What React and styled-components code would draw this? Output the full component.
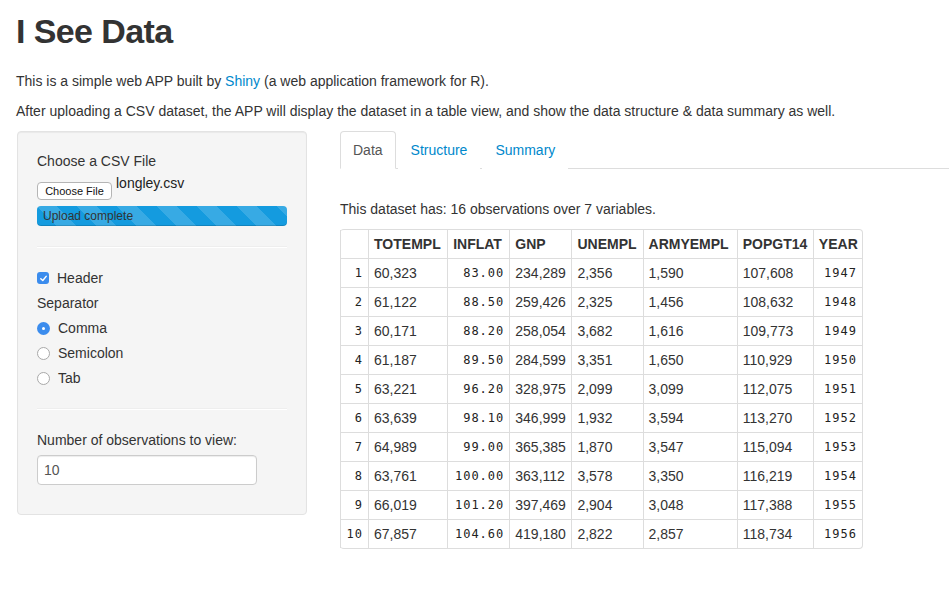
import React from "react";
import styled, { createGlobalStyle } from "styled-components";

const GlobalStyle = createGlobalStyle`
  body {
    margin: 0;
    background: #fff;
    color: #333;
    font-family: "Liberation Sans", Arial, sans-serif;
    font-size: 14px;
    line-height: 20px;
  }
`;

const columns = ["TOTEMPL", "INFLAT", "GNP", "UNEMPL", "ARMYEMPL", "POPGT14", "YEAR"];
const widths = [28, 79, 62, 62, 71, 94, 76, 49];

const rows = [
  ["60,323", "83.00", "234,289", "2,356", "1,590", "107,608", "1947"],
  ["61,122", "88.50", "259,426", "2,325", "1,456", "108,632", "1948"],
  ["60,171", "88.20", "258,054", "3,682", "1,616", "109,773", "1949"],
  ["61,187", "89.50", "284,599", "3,351", "1,650", "110,929", "1950"],
  ["63,221", "96.20", "328,975", "2,099", "3,099", "112,075", "1951"],
  ["63,639", "98.10", "346,999", "1,932", "3,594", "113,270", "1952"],
  ["64,989", "99.00", "365,385", "1,870", "3,547", "115,094", "1953"],
  ["63,761", "100.00", "363,112", "3,578", "3,350", "116,219", "1954"],
  ["66,019", "101.20", "397,469", "2,904", "3,048", "117,388", "1955"],
  ["67,857", "104.60", "419,180", "2,822", "2,857", "118,734", "1956"],
];

// columns that R prints as monospace, right aligned
const monoCols = [1, 6];

const App = () => {
  return (
    <>
      <GlobalStyle />
      <Page>
        <Title>I See Data</Title>
        <Para>
          This is a simple web APP built by <Link href="#">Shiny</Link> (a web application framework for R).
        </Para>
        <Para>
          After uploading a CSV dataset, the APP will display the dataset in a table view, and show the data structure &amp; data summary as well.
        </Para>
        <Row>
          <Sidebar>
            <Label>Choose a CSV File</Label>
            <FileRow>
              <FileButton>Choose File</FileButton>
              <FileName>longley.csv</FileName>
            </FileRow>
            <Progress>
              <ProgressText>Upload complete</ProgressText>
            </Progress>
            <Divider />
            <Option>
              <CheckBox>
                <svg width="9" height="9" viewBox="0 0 10 10">
                  <path d="M2 5.2 L4.2 7.3 L8 2.6" fill="none" stroke="#fff" strokeWidth="1.6" strokeLinecap="round" strokeLinejoin="round" />
                </svg>
              </CheckBox>
              Header
            </Option>
            <GroupLabel>Separator</GroupLabel>
            <Option>
              <Radio checked />
              Comma
            </Option>
            <Option>
              <Radio />
              Semicolon
            </Option>
            <Option>
              <Radio />
              Tab
            </Option>
            <Divider />
            <Label>Number of observations to view:</Label>
            <NumberInput>10</NumberInput>
          </Sidebar>
          <Main>
            <Tabs>
              <Tab active>Data</Tab>
              <Tab>Structure</Tab>
              <Tab>Summary</Tab>
            </Tabs>
            <Caption>This dataset has: 16 observations over 7 variables.</Caption>
            <Table>
              <colgroup>
                {widths.map((w, i) => (
                  <col key={i} style={{ width: w }} />
                ))}
              </colgroup>
              <thead>
                <tr>
                  <Th />
                  {columns.map((c) => (
                    <Th key={c}>{c}</Th>
                  ))}
                </tr>
              </thead>
              <tbody>
                {rows.map((r, i) => (
                  <tr key={i}>
                    <Td mono>{i + 1}</Td>
                    {r.map((v, j) => (
                      <Td key={j} mono={monoCols.includes(j)}>
                        {v}
                      </Td>
                    ))}
                  </tr>
                ))}
              </tbody>
            </Table>
          </Main>
        </Row>
      </Page>
    </>
  );
};

const Page = styled.div`
  padding: 0 0 40px 16px;
`;

const Title = styled.h1`
  margin: 11px 0 20px;
  font-size: 34px;
  line-height: 40px;
  font-weight: bold;
  color: #333;
  letter-spacing: -0.6px;
`;

const Para = styled.p`
  margin: 0 0 10px;
`;

const Link = styled.a`
  color: #0088cc;
  text-decoration: none;
`;

const Row = styled.div`
  display: flex;
  align-items: flex-start;
  gap: 33px;
`;

// панель слева
const Sidebar = styled.div`
  width: 250px;
  flex-shrink: 0;
  margin-left: 1px;
  padding: 19px;
  background: #f5f5f5;
  border: 1px solid #e3e3e3;
  border-radius: 4px;
  box-shadow: inset 0 1px 1px rgba(0, 0, 0, 0.05);
`;

const Label = styled.div`
  margin-bottom: 5px;
`;

const FileRow = styled.div`
  display: flex;
  align-items: flex-start;
  gap: 4px;
  height: 30px;
`;

const FileButton = styled.div`
  margin-top: 6px;
  width: 73px;
  height: 16px;
  border: 1px solid #b5b5b5;
  border-radius: 4px;
  background: #fff;
  color: #111;
  font-size: 11px;
  line-height: 17px;
  text-align: center;
`;

const FileName = styled.div`
  margin-top: -3px;
  color: #222;
`;

const Progress = styled.div`
  height: 20px;
  border-radius: 4px;
  background-color: #149bdf;
  background-image: linear-gradient(
    45deg,
    rgba(255, 255, 255, 0.15) 25%,
    transparent 25%,
    transparent 50%,
    rgba(255, 255, 255, 0.15) 50%,
    rgba(255, 255, 255, 0.15) 75%,
    transparent 75%,
    transparent
  );
  background-size: 40px 40px;
  box-shadow: inset 0 -1px 0 rgba(0, 0, 0, 0.15);
`;

const ProgressText = styled.div`
  padding-left: 6px;
  font-size: 12px;
  line-height: 20px;
  color: #333;
`;

const Divider = styled.hr`
  margin: 20px 0;
  border: 0;
  border-top: 1px solid #eee;
  border-bottom: 1px solid #fff;
`;

const Option = styled.div`
  display: flex;
  align-items: center;
  gap: 8px;
  margin-bottom: 5px;
`;

const GroupLabel = styled.div`
  margin-bottom: 5px;
`;

const CheckBox = styled.span`
  display: flex;
  align-items: center;
  justify-content: center;
  width: 12px;
  height: 12px;
  border-radius: 3px;
  background: #3b8ced;
`;

const Radio = styled.span`
  position: relative;
  width: ${({ checked }) => (checked ? "13px" : "11px")};
  height: ${({ checked }) => (checked ? "13px" : "11px")};
  border-radius: 50%;
  background: ${({ checked }) => (checked ? "#3b8ced" : "#fff")};
  border: ${({ checked }) => (checked ? "0" : "1px solid #a9a9a9")};

  &::after {
    content: "";
    display: ${({ checked }) => (checked ? "block" : "none")};
    position: absolute;
    left: 5px;
    top: 5px;
    width: 3px;
    height: 3px;
    border-radius: 50%;
    background: #fff;
  }
`;

const NumberInput = styled.div`
  width: 206px;
  height: 20px;
  padding: 4px 6px;
  margin-bottom: 10px;
  background: #fff;
  border: 1px solid #ccc;
  border-radius: 4px;
  box-shadow: inset 0 1px 1px rgba(0, 0, 0, 0.075);
  color: #555;
`;

// правая часть
const Main = styled.div`
  flex: 1;
  min-width: 0;
`;

const Tabs = styled.div`
  display: flex;
  border-bottom: 1px solid #ddd;
  margin-bottom: 30px;
`;

const Tab = styled.div`
  margin-right: 2px;
  margin-bottom: -1px;
  padding: 8px 12px;
  line-height: 20px;
  border: 1px solid ${({ active }) => (active ? "#ddd" : "transparent")};
  border-bottom-color: ${({ active }) => (active ? "#fff" : "transparent")};
  border-radius: 4px 4px 0 0;
  background: #fff;
  color: ${({ active }) => (active ? "#555" : "#0088cc")};
`;

const Caption = styled.p`
  margin: 0 0 10px;
`;

const Table = styled.table`
  width: 523px;
  table-layout: fixed;
  border-collapse: separate;
  border-spacing: 0;
  border: 1px solid #ddd;
  border-left: 0;
  border-radius: 4px;
`;

const Th = styled.th`
  padding: 4px 5px;
  text-align: left;
  font-weight: bold;
  border-left: 1px solid #ddd;
  white-space: nowrap;
`;

const Td = styled.td`
  padding: 4px 5px;
  border-left: 1px solid #ddd;
  border-top: 1px solid #ddd;
  white-space: nowrap;
  text-align: ${({ mono }) => (mono ? "right" : "left")};
  font-family: ${({ mono }) => (mono ? '"DejaVu Sans Mono", monospace' : "inherit")};
  font-size: ${({ mono }) => (mono ? "12px" : "14px")};
  letter-spacing: ${({ mono }) => (mono ? "1px" : "0")};
  color: ${({ mono }) => (mono ? "#222" : "#333")};
`;

export default App;
